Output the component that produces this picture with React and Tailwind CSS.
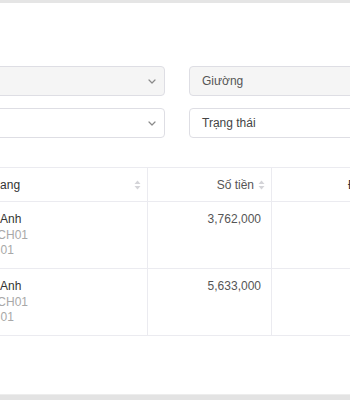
import React from 'react';

const rows = [
  { name: 'Nguyễn Anh', room: 'Phòng: CH01', bed: 'Giường 01', amount: '3,762,000' },
  { name: 'Nguyễn Anh', room: 'Phòng: CH01', bed: 'Giường 01', amount: '5,633,000' },
];

function Chevron() {
  return (
    <svg width="8" height="5" viewBox="0 0 8 5" fill="none">
      <path d="M1 1l3 3 3-3" stroke="#8a8a8a" strokeWidth="1.2" strokeLinecap="round" strokeLinejoin="round" />
    </svg>
  );
}

function SortIcon() {
  return (
    <svg width="7" height="10" viewBox="0 0 7 10">
      <path d="M3.5 0.5L6.5 4H0.5z" fill="#d4d4d8" />
      <path d="M3.5 9.5L0.5 6h6z" fill="#d4d4d8" />
    </svg>
  );
}

function App() {
  return (
    <div className="w-[350px] h-[400px] overflow-hidden bg-white flex flex-col font-['Liberation_Sans',Arial,sans-serif] text-[12px]">
      <div className="h-[3px] shrink-0 bg-[#e5e5e5]" />

      <div className="ml-[-60px] pt-[63px] flex flex-col gap-3">
        {/* bộ lọc */}
        <div className="flex gap-[24px]">
          <div className="w-[225px] h-[30px] shrink-0 rounded border border-[#dedee4] bg-[#f5f5f5] flex items-center justify-end pr-[8px]">
            <Chevron />
          </div>
          <div className="w-[220px] h-[30px] shrink-0 rounded border border-[#dedee4] bg-[#f5f5f5] flex items-center pl-[12px] text-[#555]">
            Giường
          </div>
        </div>
        <div className="flex gap-[24px]">
          <div className="w-[225px] h-[30px] shrink-0 rounded border border-[#dedee4] bg-white flex items-center justify-end pr-[8px]">
            <Chevron />
          </div>
          <div className="w-[220px] h-[30px] shrink-0 rounded border border-[#dedee4] bg-white flex items-center pl-[12px] text-[#444]">
            Trạng thái
          </div>
        </div>
      </div>

      {/* bảng */}
      <div className="ml-[-60px] mt-[29px] w-[560px] shrink-0 border-t border-[#ebebf0]">
        <div className="flex h-[34px] border-b border-[#ebebf0] text-[#333]">
          <div className="w-[208px] shrink-0 flex items-center justify-between pl-[16px] pr-[6px] border-r border-[#ebebf0]">
            <span>Khách hang</span>
            <SortIcon />
          </div>
          <div className="w-[124px] shrink-0 flex items-center justify-end gap-[4px] pr-[6px] border-r border-[#ebebf0] text-[#555]">
            <span>Số tiền</span>
            <SortIcon />
          </div>
          <div className="flex-1 flex items-center pl-[76px]">
            <span>Đã thanh toán</span>
          </div>
        </div>
        {rows.map((r, i) => (
          <div key={i} className="flex h-[67px] border-b border-[#ebebf0]">
            <div className="w-[208px] shrink-0 pl-[16px] pt-[10px] leading-[15.5px] border-r border-[#ebebf0]">
              <div className="text-[#333]">{r.name}</div>
              <div className="text-[#a8a8a8]">{r.room}</div>
              <div className="text-[#a8a8a8]">{r.bed}</div>
            </div>
            <div className="w-[124px] shrink-0 pr-[10px] pt-[10px] leading-[15.5px] text-right text-[#555] border-r border-[#ebebf0]">
              {r.amount}
            </div>
            <div className="flex-1" />
          </div>
        ))}
      </div>

      <div className="flex-1" />
      <div className="h-[6px] shrink-0 bg-[#e3e3e3] border-t border-[#ededed]" />
    </div>
  );
}

export default App;
